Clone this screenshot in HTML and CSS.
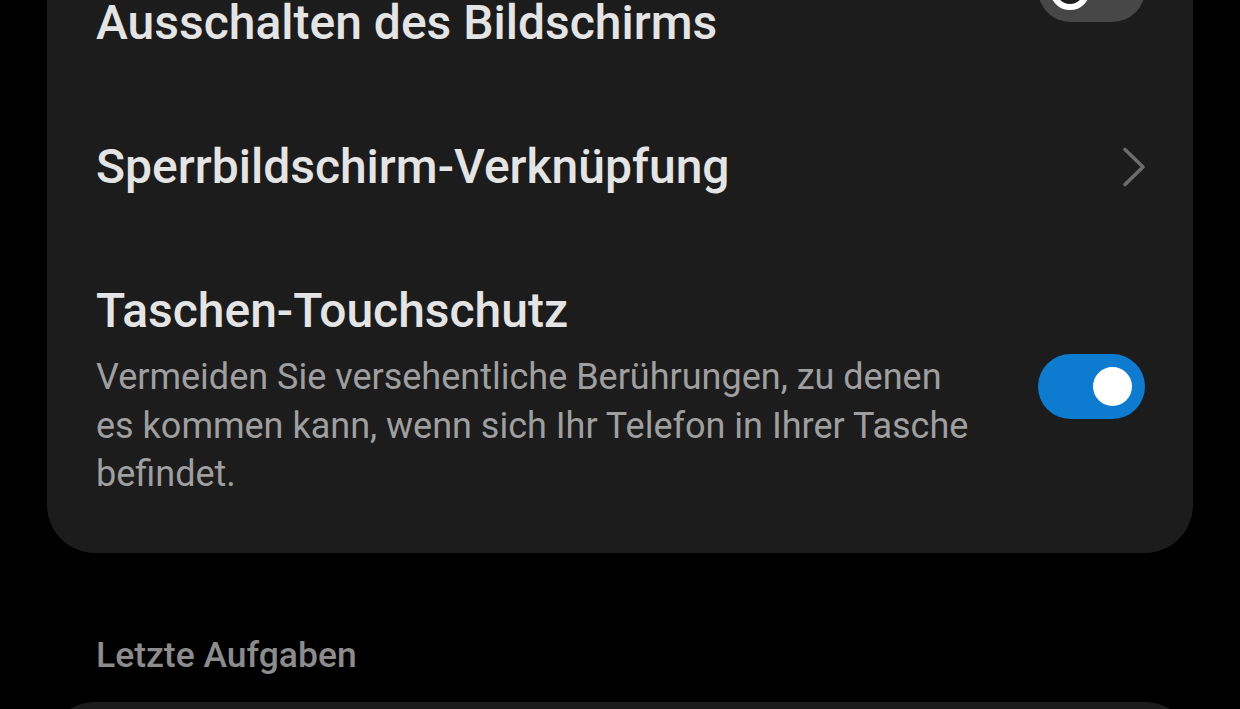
FILE: index.html
```html
<!DOCTYPE html>
<html lang="de">
<head>
  <meta charset="UTF-8" />
  <meta name="viewport" content="width=device-width, initial-scale=1.0"/>
  <title>Sperrbildschirm</title>
  <link rel="stylesheet" href="styles.css">
</head>
<body>
  <div class="ajustes">
    <section class="tarjeta">
      <div class="fila fila-primera">
        <div class="textos">
          <div class="titulo">Ausschalten des Bildschirms</div>
        </div>
        <span class="interruptor apagado"><span class="bola"></span></span>
      </div>

      <div class="fila">
        <div class="textos">
          <div class="titulo">Sperrbildschirm-Verknüpfung</div>
        </div>
        <svg class="flecha" width="26" height="42" viewBox="0 0 26 42" aria-hidden="true">
          <path d="M4 3.5 L22 21 L4 38.5" fill="none" stroke="#6c6c6c" stroke-width="3.6" stroke-linecap="round" stroke-linejoin="round"/>
        </svg>
      </div>

      <div class="fila fila-ultima">
        <div class="textos">
          <div class="titulo">Taschen-Touchschutz</div>
          <p class="descripcion">Vermeiden Sie versehentliche Berührungen, zu denen es kommen kann, wenn sich Ihr Telefon in Ihrer Tasche befindet.</p>
        </div>
        <span class="interruptor encendido"><span class="bola"></span></span>
      </div>
    </section>

    <h2 class="seccion">Letzte Aufgaben</h2>

    <section class="tarjeta tarjeta-abajo"></section>
  </div>
</body>
</html>
```

FILE: styles.css
```css
html, body {
  height: 100%;
}

body {
  margin: 0;
  padding: 0;
  background: #000000;
  font-family: Roboto, "Noto Sans", sans-serif;
  overflow: hidden;
}

.ajustes {
  display: flex;
  flex-direction: column;
}

.tarjeta {
  margin: -49px 47px 0 47px;
  background: #1c1c1c;
  border-radius: 0 0 48px 48px;
  padding-bottom: 10px;
}

.fila {
  display: flex;
  align-items: center;
  justify-content: space-between;
  padding: 44px 48px 44px 49px;
}

.fila-primera {
  align-items: flex-start;
}

.fila-primera .interruptor {
  margin-top: -38px;
}

.fila-ultima .interruptor {
  margin-bottom: 8px;
}

.textos {
  flex: 1;
  min-width: 0;
  padding-right: 40px;
}

.titulo {
  font-size: 48px;
  line-height: 56px;
  font-weight: 500;
  color: #e4e4e4;
}

.descripcion {
  margin: 14px 0 0 0;
  font-size: 36px;
  line-height: 48.5px;
  color: #9f9f9f;
  max-width: 886px;
}

.interruptor {
  position: relative;
  flex: none;
  width: 107px;
  height: 65px;
  border-radius: 33px;
}

.interruptor.apagado {
  background: #474747;
}

.interruptor.encendido {
  background: #0d7bcf;
}

.interruptor .bola {
  position: absolute;
  top: 50%;
  box-sizing: border-box;
  border-radius: 50%;
}

.apagado .bola {
  left: 12px;
  width: 40px;
  height: 40px;
  margin-top: -20px;
  border: 6px solid #ffffff;
  background: #1c1c1c;
}

.encendido .bola {
  right: 13px;
  width: 39px;
  height: 39px;
  margin-top: -19.5px;
  background: #ffffff;
}

.flecha {
  flex: none;
  display: block;
  margin-right: -2px;
}

.seccion {
  margin: 81px 0 26px 0;
  padding-left: 96px;
  font-size: 35.5px;
  line-height: 42px;
  font-weight: 500;
  color: #8c8c8c;
}

.tarjeta-abajo {
  margin: 0 47px;
  height: 200px;
  border-radius: 48px 48px 0 0;
}
```
